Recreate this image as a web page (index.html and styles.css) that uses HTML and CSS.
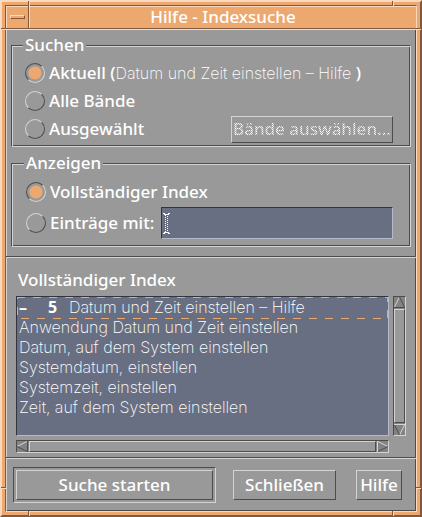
FILE: index.html
```html
<!DOCTYPE html>
<html lang="de">
<head>
<meta charset="utf-8">
<title>Hilfe - Indexsuche</title>
<link rel="stylesheet" href="styles.css">
</head>
<body>
<div class="window">
  <header class="titlebar">
    <button class="menu-button" type="button" aria-label="Fenstermenü"><span class="menu-glyph"></span></button>
    <h1 class="title">Hilfe - Indexsuche</h1>
  </header>
  <form class="content">
    <div class="options">
      <fieldset class="group">
        <legend>Suchen</legend>
        <div class="row">
          <input class="radio" type="radio" name="scope" id="current" checked>
          <label for="current">Aktuell (<span class="thin">Datum und Zeit einstellen – Hilfe </span>)</label>
        </div>
        <div class="row">
          <input class="radio" type="radio" name="scope" id="all">
          <label for="all">Alle Bände</label>
        </div>
        <div class="row">
          <input class="radio" type="radio" name="scope" id="selected">
          <label for="selected">Ausgewählt</label>
          <button class="button volumes" type="button" disabled><span class="stipple">Bände auswählen...</span></button>
        </div>
      </fieldset>
      <fieldset class="group show">
        <legend>Anzeigen</legend>
        <div class="row">
          <input class="radio" type="radio" name="show" id="full" checked>
          <label for="full">Vollständiger Index</label>
        </div>
        <div class="row entry-row">
          <input class="radio" type="radio" name="show" id="entries">
          <label for="entries">Einträge mit:</label>
          <div class="entry">
            <input class="entry-field" type="text" aria-label="Einträge mit">
            <svg class="ibeam" width="7" height="21" viewBox="0 0 7 21" aria-hidden="true"><path d="M0 .5h2M5 .5h2M1 1.5h5M1 19.5h5M0 20.5h2M5 20.5h2"/><path class="stem" d="M2.5 2v17M4.5 3v16"/></svg>
          </div>
        </div>
      </fieldset>
    </div>
    <section class="results">
      <h2 class="results-title" id="results-title">Vollständiger Index</h2>
      <div class="scroller">
        <ul class="list" aria-labelledby="results-title">
          <li class="current"><b class="sign">–</b><b class="count">5</b>Datum und Zeit einstellen – Hilfe
            <svg class="focus" aria-hidden="true"><rect x="0" y="0" width="100%" height="100%"/></svg>
          </li>
          <li>Anwendung Datum und Zeit einstellen</li>
          <li>Datum, auf dem System einstellen</li>
          <li>Systemdatum, einstellen</li>
          <li>Systemzeit, einstellen</li>
          <li>Zeit, auf dem System einstellen</li>
        </ul>
        <div class="bar vertical">
          <button class="arrow" type="button" aria-label="Nach oben"><svg width="11" height="11" viewBox="0 0 11 11"><path class="lit" d="M5.5 0L.5 10"/><path class="dim" d="M5.5 0l5 10M0 10.5h11"/></svg></button>
          <div class="thumb"></div>
          <button class="arrow" type="button" aria-label="Nach unten"><svg width="11" height="11" viewBox="0 0 11 11"><path class="lit" d="M0 .5h11M10.5 1l-5 10"/><path class="dim" d="M.5 1l5 10"/></svg></button>
        </div>
        <div class="bar horizontal">
          <button class="arrow" type="button" aria-label="Nach links"><svg width="11" height="11" viewBox="0 0 11 11"><path class="lit" d="M0 5.5l10-5"/><path class="dim" d="M0 5.5l10 5M10.5 0v11"/></svg></button>
          <div class="thumb"></div>
          <button class="arrow" type="button" aria-label="Nach rechts"><svg width="11" height="11" viewBox="0 0 11 11"><path class="lit" d="M.5 0v11M1 .5l10 5"/><path class="dim" d="M1 10.5l10-5"/></svg></button>
        </div>
      </div>
    </section>
    <footer class="actions">
      <div class="default-frame"><button class="button" type="button">Suche starten</button></div>
      <button class="button close" type="button">Schließen</button>
      <button class="button help" type="button">Hilfe</button>
    </footer>
  </form>
  <i class="notch across top-left"></i><i class="notch across top-right"></i>
  <i class="notch across bottom-left"></i><i class="notch across bottom-right"></i>
  <i class="notch down left-top"></i><i class="notch down right-top"></i>
  <i class="notch down left-bottom"></i><i class="notch down right-bottom"></i>
</div>
</body>
</html>
```
FILE: styles.css
```css
:root {
  --frame: #eda870;
  --frame-light: #f9d9c0;
  --frame-dark: #84583a;
  --gray: #999999;
  --light: #d4d4d4;
  --dark: #4c4c4c;
  --trough: #838383;
  --field: #696f82;
  --field-light: #b6bac8;
  --field-dark: #32353f;
  --bold: "Noto Sans", "DejaVu Sans", sans-serif;
  --thin: Inter, "Liberation Sans", sans-serif;
}

* { box-sizing: border-box; }

body {
  margin: 0;
  color: #fff;
  font: 500 17px/20px var(--bold);
}

button, input { font: inherit; color: inherit; margin: 0; }
h1, h2 { margin: 0; font: inherit; }

.window {
  position: relative;
  display: flex;
  flex-direction: column;
  min-height: 100vh;
  padding: 3px;
  background: var(--frame);
  border: 2px solid;
  border-color: var(--frame-light) var(--frame-dark) var(--frame-dark) var(--frame-light);
}

.titlebar {
  display: flex;
  height: 24px;
  border: 1px solid;
  border-color: var(--frame-dark) var(--frame-light) var(--frame-dark) var(--frame-dark);
  box-shadow: inset 1px 1px var(--frame-light);
}

.menu-button {
  display: grid;
  place-items: center;
  width: 23px;
  padding: 0;
  background: none;
  border: 0;
  border-right: 1px solid var(--frame-dark);
}

.menu-glyph {
  width: 15px;
  height: 4px;
  border: 1px solid;
  border-color: var(--frame-light) var(--frame-dark) var(--frame-dark) var(--frame-light);
}

.title {
  flex: 1;
  text-align: center;
  line-height: 22px;
  border-left: 1px solid var(--frame-light);
}

.content {
  flex: 1;
  display: flex;
  flex-direction: column;
  background: var(--gray);
  border: 1px solid;
  border-color: var(--frame-light) var(--frame-light) var(--frame-light) var(--frame-dark);
  box-shadow: inset 1px 0 var(--light), inset -1px -1px var(--dark);
}

.options {
  display: flex;
  flex-direction: column;
  gap: 6px;
  padding: 5px 5px 9px;
}

.group {
  min-width: 0;
  margin: 0;
  padding: 4px 17px 3px 13px;
  border: 1px solid;
  border-color: var(--dark) var(--light) var(--light) var(--dark);
  box-shadow: inset 1px 1px var(--light), inset -1px -1px var(--dark);
}

.show { padding: 5px 17px 6px 14px; }

legend {
  margin-left: -2px;
  padding: 0 2px;
  background: var(--gray);
}

.row {
  display: flex;
  align-items: center;
  gap: 4px;
  height: 28px;
}

.entry-row { height: 34px; }

.radio {
  appearance: none;
  flex: none;
  width: 20px;
  height: 20px;
  border: 1px solid;
  border-color: var(--light) var(--dark) var(--dark) var(--light);
  border-radius: 50%;
}

.radio:checked {
  border-color: var(--dark) var(--light) var(--light) var(--dark);
  background: radial-gradient(circle, var(--frame) 6px, transparent 7px);
}

.thin { font: 200 16px/20px var(--thin); }

.button {
  height: 30px;
  padding: 0;
  background: var(--gray);
  border: 1px solid;
  border-color: var(--light) var(--dark) var(--dark) var(--light);
  white-space: nowrap;
}

.volumes { width: 162px; height: 27px; margin-left: auto; }

.stipple {
  color: transparent;
  background: repeating-conic-gradient(#fff 0 25%, #acacac 0 50%) 0 0 / 2px 2px;
  background-clip: text;
}

.entry { position: relative; flex: 1; display: flex; margin-left: 3px; }

.entry-field {
  width: 100%;
  height: 32px;
  background: var(--field);
  border: 1px solid;
  border-color: var(--field-dark) var(--field-light) var(--field-light) var(--field-dark);
}

.ibeam {
  position: absolute;
  left: 2px;
  top: 6px;
  stroke: #fff;
  fill: none;
  shape-rendering: crispEdges;
}

.stem { stroke-dasharray: 1 1; }

.results {
  flex: 1;
  display: flex;
  flex-direction: column;
  padding: 13px 10px 4px;
  border-top: 1px solid var(--dark);
  box-shadow: inset 0 1px var(--light);
}

.results-title { padding: 0 2px 6px; }

.scroller {
  flex: 1;
  display: grid;
  grid-template: 1fr 13px / 1fr 13px;
  gap: 4px;
}

.list {
  margin: 0;
  padding: 0;
  list-style: none;
  font: 200 16px/20px var(--thin);
  background: var(--field);
  border: 1px solid;
  border-color: var(--field-dark) var(--field-light) var(--field-light) var(--field-dark);
}

.list li { padding-left: 2px; }
.list .current { position: relative; display: flex; }
.list b { font-family: var(--bold); font-weight: 700; }
.sign { width: 29px; }
.count { width: 21px; }

.focus {
  position: absolute;
  left: 0;
  top: 0;
  width: 100%;
  height: 22px;
  fill: none;
  stroke: var(--frame);
  stroke-width: 2px;
  stroke-dasharray: 8 8;
}

.bar {
  display: flex;
  background: var(--trough);
  border: 1px solid;
  border-color: var(--dark) var(--light) var(--light) var(--dark);
}

.vertical { flex-direction: column; }
.arrow { display: block; flex: none; height: 11px; width: 11px; padding: 0; border: 0; background: none; }
.arrow svg { display: block; fill: none; }
.lit { stroke: var(--light); }
.dim { stroke: var(--dark); }

.thumb {
  flex: 1;
  margin: 1px 0;
  background: var(--gray);
  border: 1px solid;
  border-color: var(--light) var(--dark) var(--dark) var(--light);
}

.horizontal .thumb { margin: 0 1px; }

.actions {
  display: flex;
  align-items: center;
  padding: 9px 14px 8px 7px;
  border-top: 1px solid var(--dark);
  box-shadow: inset 0 1px var(--light);
}

.default-frame {
  display: flex;
  width: 203px;
  padding: 2px;
  border: 1px solid;
  border-color: var(--dark) var(--light) var(--light) var(--dark);
}

.default-frame .button { flex: 1; }
.close { width: 103px; margin: 0 auto 0 17px; }
.help { width: 46px; }

.notch { position: absolute; }
.across { width: 5px; height: 2px; border-top: 1px solid var(--frame-dark); border-bottom: 1px solid var(--frame-light); }
.down { width: 2px; height: 5px; border-left: 1px solid var(--frame-dark); border-right: 1px solid var(--frame-light); }
.top-left { left: -1px; top: 26px; }
.top-right { right: -1px; top: 26px; }
.bottom-left { left: -1px; bottom: 26px; }
.bottom-right { right: -1px; bottom: 26px; }
.left-top { left: 26px; top: -1px; }
.right-top { right: 26px; top: -1px; }
.left-bottom { left: 26px; bottom: -1px; }
.right-bottom { right: 26px; bottom: -1px; }
```
